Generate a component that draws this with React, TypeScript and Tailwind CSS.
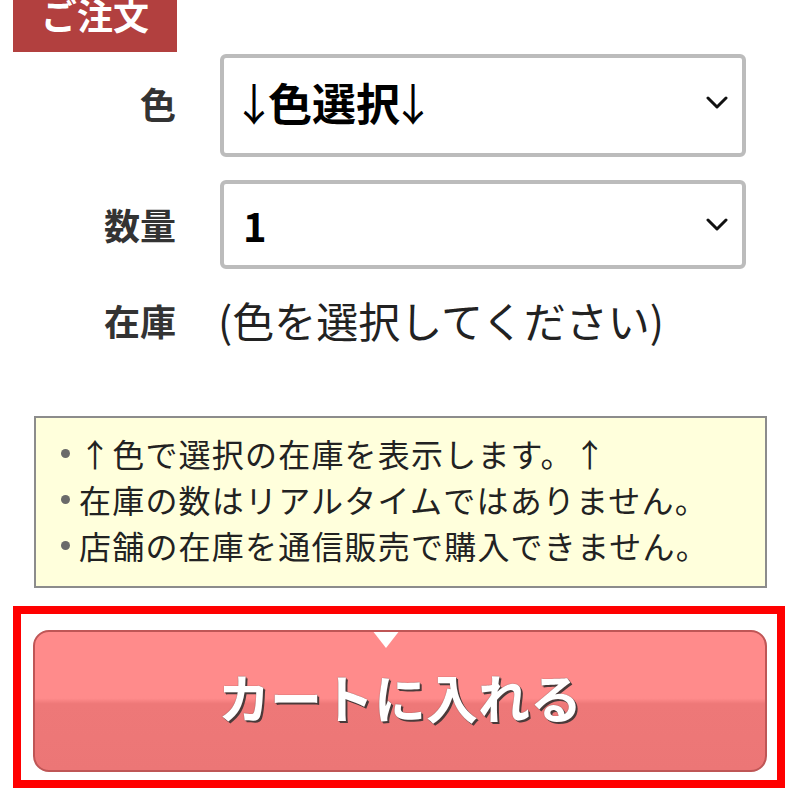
import React from "react";

const jp = { fontFamily: '"Noto Sans CJK JP", "Noto Sans", sans-serif' };

function Chevron({ up }: { up?: boolean }) {
  return (
    <svg width="22" height="14" viewBox="0 0 22 14" className={up ? "mb-[6px] shrink-0" : "shrink-0"}>
      <path d="M2 2 L11 11 L20 2" fill="none" stroke="#111" strokeWidth="3" strokeLinecap="round" strokeLinejoin="round" />
    </svg>
  );
}

function SelectBox({ children, h, up }: { children: React.ReactNode; h: string; up?: boolean }) {
  return (
    <div className={`flex ${h} w-[526px] items-center justify-between rounded-[6px] border-[4px] border-[#bcbcbc] bg-white pl-[19px] pr-[14px]`}>
      <span className={`flex items-center text-[40px] font-bold leading-none text-black ${up ? "mb-[7px]" : ""}`}>{children}</span>
      <Chevron up={up} />
    </div>
  );
}

function Arrow() {
  return (
    <span className="inline-flex w-[22px] justify-center text-[44px] font-normal">
      <span className="shrink-0">↓</span>
    </span>
  );
}

export default function App() {
  const notes = [
    "↑色で選択の在庫を表示します。↑",
    "在庫の数はリアルタイムではありません。",
    "店舗の在庫を通信販売で購入できません。",
  ];
  return (
    <div className="h-[800px] w-[800px] overflow-hidden bg-white" style={jp}>
      {/* header tag */}
      <div className="ml-[13px] flex h-[52px] w-[164px] justify-center overflow-hidden bg-[#b2403f]">
        <span className="mt-[-4px] text-[36px] font-bold leading-[36px] text-white">ご注文</span>
      </div>

      {/* form rows */}
      <div className="mt-[2px] flex flex-col">
        <div className="flex items-center">
          <div className="mb-[6px] w-[176px] text-right text-[36px] font-bold leading-none text-[#333]">色</div>
          <div className="ml-[44px]">
            <SelectBox h="h-[103px]" up>
              <Arrow />
              <span className="ml-[3px] mr-[2px] text-[44px]">色選択</span>
              <Arrow />
            </SelectBox>
          </div>
        </div>
        <div className="mt-[23px] flex items-center">
          <div className="mb-[2px] w-[176px] text-right text-[36px] font-bold leading-none text-[#333]">数量</div>
          <div className="ml-[44px]">
            <SelectBox h="h-[89px]">1</SelectBox>
          </div>
        </div>
        <div className="mt-[26px] flex h-[50px] items-center">
          <div className="w-[176px] text-right text-[36px] font-bold leading-none text-[#333]">在庫</div>
          <div className="ml-[42px] text-[42px] leading-none text-[#222]">(色を選択してください)</div>
        </div>
      </div>

      {/* notice box */}
      <div className="ml-[34px] mt-[71px] h-[172px] w-[733px] border-2 border-[#8c8c8c] bg-[#ffffdc] pl-[25px] pt-[12px]">
        {notes.map((n, i) => (
          <div key={i} className="flex h-[46px] items-center text-[32px] leading-none tracking-[1.2px] text-[#222]">
            <span className="mr-[9px] inline-block h-[9px] w-[9px] shrink-0 rounded-full bg-[#6a6a6a]" />
            <span className="whitespace-nowrap">{i === 0 ? " " + n : n}</span>
          </div>
        ))}
      </div>

      {/* cart button with red outline */}
      <div className="ml-[13px] mt-[18px] h-[182px] w-[772px] border-[8px] border-[#ff0000] bg-white pl-[12px] pr-[10px] pt-[16px]">
        <div className="relative flex h-[142px] w-full items-center justify-center overflow-hidden rounded-[16px] border-2 border-[#bf5656] bg-[linear-gradient(to_bottom,#ff8b8b_0%,#ff8b8b_48%,#ee7878_52%,#ec7676_100%)]">
          <svg className="absolute left-[337px] top-[-2px]" width="28" height="20" viewBox="0 0 28 20">
            <path d="M0 0 L28 0 L14 18 Z" fill="#ffffff" />
          </svg>
          <span
            className="mb-[8px] text-[52px] font-bold leading-none text-white"
            style={{ textShadow: "2px 2px 0 #4a3a3a, 1px 1px 0 #6a4a4a, 0 0 1px #5a3a3a" }}
          >
            カートに入れる
          </span>
        </div>
      </div>
    </div>
  );
}
